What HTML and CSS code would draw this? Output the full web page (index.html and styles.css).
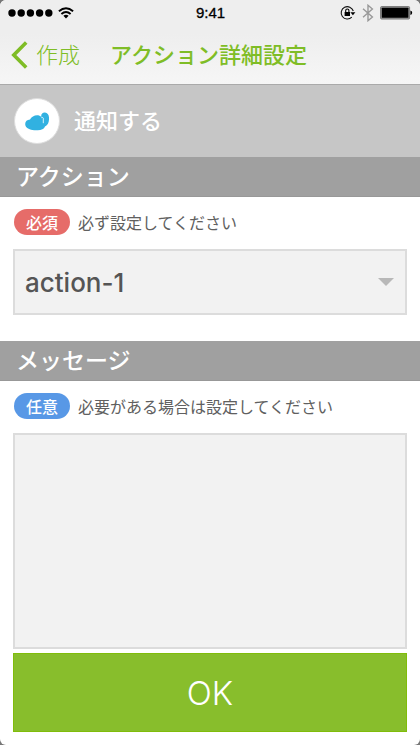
FILE: index.html
```html
<!DOCTYPE html>
<html lang="ja">
<head>
<meta charset="utf-8">
<meta name="viewport" content="width=device-width, initial-scale=1">
<title>アクション詳細設定</title>
<link rel="stylesheet" href="styles.css">
</head>
<body>
<div class="screen">
  <header class="top">
    <div class="status">
      <div class="status-left">
        <svg class="dots" width="46" height="8" viewBox="0 0 46 8" aria-hidden="true">
          <circle cx="4" cy="4" r="3.7"/><circle cx="13.2" cy="4" r="3.7"/><circle cx="22.4" cy="4" r="3.7"/><circle cx="31.6" cy="4" r="3.7"/><circle cx="40.8" cy="4" r="3.7"/>
        </svg>
        <svg width="16" height="12" viewBox="0 0 16 12" aria-hidden="true">
          <path d="M.9 4.3Q8-2 15.1 4.3M3.4 7Q8 3 12.6 7" fill="none" stroke="#000" stroke-width="1.9"/>
          <path d="M5.4 8.8Q8 6.8 10.6 8.8L8 11.5Z"/>
        </svg>
      </div>
      <time class="clock">9:41</time>
      <div class="status-right">
        <svg width="16" height="16" viewBox="0 0 16 16" aria-hidden="true">
          <path d="M13.3 6A6.2 6.2 0 1 0 11.8 12.2" fill="none" stroke="#111" stroke-width="1.1"/>
          <path d="M10.4 7.2h5l-2.5 3z"/>
          <rect x="4.6" y="7" width="5.4" height="4"/>
          <path d="M5.7 7V5.6a1.6 1.6 0 0 1 3.2 0V7" fill="none" stroke="#000" stroke-width="1.1"/>
        </svg>
        <svg width="12" height="18" viewBox="0 0 12 18" aria-hidden="true">
          <path d="M1 4.8l9.4 8.2L6 16.7V1.3L10.4 5 1 13.2" fill="none" stroke="#999" stroke-width="1.4"/>
        </svg>
        <svg width="33" height="14" viewBox="0 0 33 14" aria-hidden="true">
          <rect x=".6" y=".6" width="29" height="12.4" rx="1" fill="#999" stroke="#777" stroke-width="1"/>
          <rect x="1.8" y="1.8" width="26.6" height="10" rx=".5"/>
          <path d="M30.4 4.6q1.8.4 1.8 2.2t-1.8 2.2z"/>
        </svg>
      </div>
    </div>
    <nav class="nav">
      <a class="back" href="#">
        <svg width="17" height="28" viewBox="0 0 17 28" aria-hidden="true"><path d="M15.2 1.6L2.8 14l12.4 12.4" fill="none" stroke="#7fbd26" stroke-width="3.6"/></svg>
        <span class="back-label">作成</span>
      </a>
      <h1 class="title">アクション詳細設定</h1>
    </nav>
  </header>
  <main class="main">
    <div class="service">
      <span class="avatar">
        <svg width="24" height="19" viewBox="0 0 24 19" aria-hidden="true">
          <path d="M5 7.4C7 3.4 13.6 1.6 16.4 5.2 15.6 2.4 17.4.4 20 .6 23 .9 24.4 3.8 24 7.6 23.8 10.8 22.8 13.4 20 14.6 19 17.6 15.8 18.4 11.6 18.2 5.4 18.2.4 16.4.2 12.2.1 9.4 2 7.6 5 7.4Z" fill="#31b1e1"/>
          <path d="M16.3 5.7q1.7-.7 2 .4v5.1" fill="none" stroke="#e6f8fe" stroke-width=".9"/>
        </svg>
      </span>
      <span class="service-name">通知する</span>
    </div>
    <h2 class="section"><label for="action">アクション</label></h2>
    <div class="hint"><span class="badge required">必須</span><span>必ず設定してください</span></div>
    <div class="field picker">
      <select id="action" class="select"><option>action-1</option></select>
      <svg class="caret" width="16" height="8" viewBox="0 0 16 8" aria-hidden="true"><path d="M0 0h16L8 8z" fill="#b8b8b8"/></svg>
    </div>
    <h2 class="section second"><label for="message">メッセージ</label></h2>
    <div class="hint"><span class="badge optional">任意</span><span>必要がある場合は設定してください</span></div>
    <div class="field grow"><textarea id="message" class="message"></textarea></div>
    <div class="field"><button class="ok" type="button">OK</button></div>
  </main>
</div>
</body>
</html>
```
FILE: styles.css
```css
* { box-sizing: border-box; }
body {
  margin: 0;
  background: #777;
  color: #606060;
  font-family: "Noto Sans CJK JP", sans-serif;
}
.screen {
  display: flex;
  flex-direction: column;
  min-height: 100vh;
  background: #fff;
  border-radius: 6px;
  overflow: hidden;
}
.top {
  background: linear-gradient(#eee, #eee 40%, #f6f6f6);
  border-bottom: 1px solid #aaa;
}
.status {
  display: grid;
  grid-template-columns: 1fr auto 1fr;
  align-items: center;
  height: 26px;
  padding: 0 7px 0 8px;
}
.status-left { display: flex; align-items: center; gap: 4px; }
.status-right { display: flex; align-items: center; justify-content: flex-end; gap: 6px; }
.clock {
  color: #000;
  font: 400 15px/26px "Liberation Sans", sans-serif;
  -webkit-text-stroke: 0.3px #000;
}
.nav { display: flex; align-items: center; gap: 30px; height: 58px; padding-left: 11px; }
.back {
  display: flex;
  align-items: center;
  gap: 8px;
  color: #7fbd26;
  font-size: 22px;
  font-weight: 300;
  line-height: 32px;
  text-decoration: none;
}
.back-label,
.title { padding-bottom: 4px; }
.title {
  margin: 0;
  color: #7fbd26;
  font-size: 22px;
  font-weight: 500;
  line-height: 32px;
  white-space: nowrap;
}
.main { display: flex; flex: 1; flex-direction: column; padding-bottom: 13px; }
.service {
  display: flex;
  align-items: center;
  gap: 14px;
  height: 72px;
  padding-left: 14px;
  background: #c6c6c6;
}
.avatar {
  display: grid;
  place-items: center;
  width: 46px;
  height: 46px;
  border: 1px solid #ddd;
  border-radius: 50%;
  background: #fff;
}
.service-name { padding-bottom: 4px; color: #fff; font-size: 22px; font-weight: 500; line-height: 32px; }
.section {
  margin: 0;
  padding: 0 16px 2px;
  background: #a0a0a0;
  border-bottom: 1px solid #989898;
  color: #fff;
  font-size: 23px;
  font-weight: 500;
  line-height: 37px;
}
.second { margin-top: 26px; }
.hint {
  display: flex;
  align-items: center;
  gap: 8px;
  height: 52px;
  padding: 0 0 2px 14px;
  font-size: 16px;
  line-height: 26px;
  white-space: nowrap;
}
.badge {
  width: 56px;
  border-radius: 13px;
  color: #fff;
  font-weight: 500;
  text-align: center;
}
.required { background: #e66c69; }
.optional { background: #5898e6; }
.field { display: flex; padding: 0 13px; }
.picker { position: relative; }
.select {
  appearance: none;
  width: 100%;
  height: 66px;
  padding: 0 10px;
  background: #f2f2f2;
  border: 2px solid #dcdcdc;
  border-radius: 0;
  color: #555;
  font: 500 26px Inter, "Noto Sans CJK JP", sans-serif;
}
.caret { position: absolute; top: 29px; right: 26px; pointer-events: none; }
.grow { flex: 1; margin-bottom: 4px; }
.message {
  width: 100%;
  min-height: 120px;
  padding: 11px;
  background: #f2f2f2;
  border: 2px solid #dcdcdc;
  border-radius: 0;
  color: #555;
  font: 500 16px "Noto Sans CJK JP", sans-serif;
  resize: none;
}
.ok {
  width: 100%;
  height: 79px;
  padding: 0;
  background: #88be2c;
  border: 1px solid #80bd0a;
  color: #fff;
  font: 300 33px Inter, "Noto Sans CJK JP", sans-serif;
}
```
